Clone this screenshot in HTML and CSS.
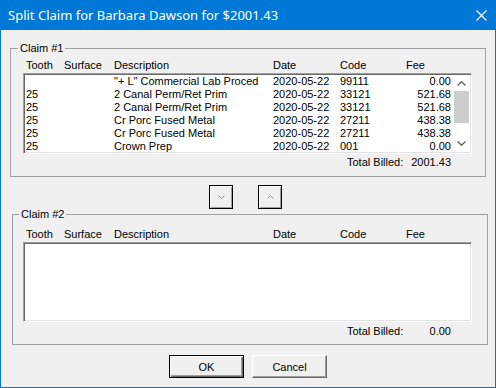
FILE: index.html
```html
<!DOCTYPE html>
<html lang="en">
<head>
    <meta charset="UTF-8">
    <title>Split Claim</title>
    <link rel="stylesheet" href="styles.css">
</head>
<body>
    <div class="window">
        <div class="titlebar">
            <span class="title">Split Claim for Barbara Dawson for $2001.43</span>
            <svg class="close" width="11" height="11" viewBox="0 0 11 11">
                <path d="M0.5 0.5 L10.5 10.5 M10.5 0.5 L0.5 10.5" stroke="#fff" stroke-width="1.1" fill="none"/>
            </svg>
        </div>

        <div class="client">
            <fieldset class="group group-one">
                <legend>Claim #1</legend>
                <div class="cols head">
                    <span>Tooth</span><span>Surface</span><span>Description</span>
                    <span>Date</span><span>Code</span><span>Fee</span>
                </div>
                <div class="list">
                    <div class="rows">
                        <div class="cols row">
                            <span></span><span></span><span>"+ L" Commercial Lab Proced</span>
                            <span>2020-05-22</span><span>99111</span><span class="fee">0.00</span>
                        </div>
                        <div class="cols row">
                            <span>25</span><span></span><span>2 Canal Perm/Ret Prim</span>
                            <span>2020-05-22</span><span>33121</span><span class="fee">521.68</span>
                        </div>
                        <div class="cols row">
                            <span>25</span><span></span><span>2 Canal Perm/Ret Prim</span>
                            <span>2020-05-22</span><span>33121</span><span class="fee">521.68</span>
                        </div>
                        <div class="cols row">
                            <span>25</span><span></span><span>Cr Porc Fused Metal</span>
                            <span>2020-05-22</span><span>27211</span><span class="fee">438.38</span>
                        </div>
                        <div class="cols row">
                            <span>25</span><span></span><span>Cr Porc Fused Metal</span>
                            <span>2020-05-22</span><span>27211</span><span class="fee">438.38</span>
                        </div>
                        <div class="cols row">
                            <span>25</span><span></span><span>Crown Prep</span>
                            <span>2020-05-22</span><span>001</span><span class="fee">0.00</span>
                        </div>
                    </div>
                    <div class="scrollbar">
                        <div class="arrow">
                            <svg width="9" height="5" viewBox="0 0 9 5"><path d="M0.5 4.5 L4.5 0.8 L8.5 4.5" stroke="#606060" stroke-width="1.4" fill="none"/></svg>
                        </div>
                        <div class="thumb"></div>
                        <div class="track"></div>
                        <div class="arrow">
                            <svg width="9" height="5" viewBox="0 0 9 5"><path d="M0.5 0.5 L4.5 4.2 L8.5 0.5" stroke="#606060" stroke-width="1.4" fill="none"/></svg>
                        </div>
                    </div>
                </div>
                <div class="total">
                    <span>Total Billed:</span>
                    <span class="amount">2001.43</span>
                </div>
            </fieldset>

            <div class="movers">
                <button class="mover">
                    <svg width="7" height="4" viewBox="0 0 7 4"><path d="M0.5 0.5 L3.5 3.5 L6.5 0.5" stroke="#8c8c8c" stroke-width="1" fill="none"/></svg>
                </button>
                <button class="mover">
                    <svg width="7" height="4" viewBox="0 0 7 4"><path d="M0.5 3.5 L3.5 0.5 L6.5 3.5" stroke="#8c8c8c" stroke-width="1" fill="none"/></svg>
                </button>
            </div>

            <fieldset class="group group-two">
                <legend>Claim #2</legend>
                <div class="cols head">
                    <span>Tooth</span><span>Surface</span><span>Description</span>
                    <span>Date</span><span>Code</span><span>Fee</span>
                </div>
                <div class="list list-empty"></div>
                <div class="total">
                    <span>Total Billed:</span>
                    <span class="amount">0.00</span>
                </div>
            </fieldset>

            <div class="actions">
                <button class="btn btn-default">OK</button>
                <button class="btn">Cancel</button>
            </div>
        </div>
    </div>
</body>
</html>
```

FILE: styles.css
```css
* {
    box-sizing: border-box;
}

body {
    margin: 0;
    font-family: "Liberation Sans", Arial, sans-serif;
    font-size: 11px;
    color: #000;
    background-color: #f0f0f0;
}

.window {
    width: 496px;
    height: 388px;
    border: 1px solid #0078d7;
    border-top: none;
    display: flex;
    flex-direction: column;
}

.titlebar {
    height: 30px;
    flex-shrink: 0;
    background-color: #0078d7;
    color: #fff;
    display: flex;
    align-items: center;
    justify-content: space-between;
    padding: 0 9px 0 8px;
    margin: 0 -1px;
}

.title {
    font-family: "Noto Sans", "Open Sans", sans-serif;
    font-size: 13px;
}

.close {
    display: block;
}

.client {
    flex: 1;
    background-color: #f0f0f0;
}

/* group boxes */

.group {
    width: 476px;
    margin: 0;
    border: 1px solid #a0a0a0;
    min-width: 0;
}

.group legend {
    line-height: 13px;
    padding: 0 2px;
}

.group-one {
    margin: 12px 0 0 9px;
    padding: 4px 13px 7px 12px;
}

.group-one legend {
    margin-left: -5px;
}

.group-two {
    margin: -1px 0 0 11px;
    padding: 7px 15px 6px 10px;
}

.group-two legend {
    margin-left: -4px;
}

/* columns */

.cols {
    display: grid;
    grid-template-columns: 41px 50px 159px 67px 66px 45px;
    line-height: 13px;
    white-space: nowrap;
}

.cols span {
    overflow: hidden;
}

.cols span:first-child {
    padding-left: 3px;
}

.head {
    margin-bottom: 1px;
}

.list {
    display: flex;
    height: 81px;
    background-color: #fff;
    border-top: 1px solid #a0a0a0;
    border-left: 1px solid #a0a0a0;
    border-right: 1px solid #fff;
    border-bottom: 1px solid #fff;
    box-shadow: inset 1px 1px 0 #696969, inset -1px -1px 0 #e3e3e3;
    padding: 1px;
}

.list-empty {
    height: 80px;
}

.rows {
    flex: 1;
    overflow: hidden;
}

.row {
    grid-template-columns: 39px 50px 159px 67px 66px 45px;
}

.row span:first-child {
    padding-left: 1px;
}

.row .fee {
    text-align: right;
}

.scrollbar {
    width: 17px;
    display: flex;
    flex-direction: column;
    background-color: #fff;
}

.arrow {
    height: 17px;
    display: flex;
    align-items: center;
    justify-content: center;
}

.thumb {
    height: 32px;
    margin: -1px 1px 0 1px;
    background-color: #cdcdcd;
}

.track {
    flex: 1;
}

.total {
    display: flex;
    line-height: 13px;
    margin-top: 2px;
    padding-left: 324px;
    padding-right: 21px;
}

.group-two .total {
    margin-top: 3px;
}

.amount {
    margin-left: auto;
    text-align: right;
}

/* buttons */

button {
    font-family: "Liberation Sans", Arial, sans-serif;
    font-size: 11px;
    color: #000;
    background-color: #f0f0f0;
    padding: 0;
    cursor: pointer;
}

.movers {
    display: flex;
    gap: 25px;
    margin: 8px 0 0 208px;
}

.mover {
    width: 24px;
    height: 24px;
    border: 1px solid #000;
    box-shadow: inset 1px 1px 0 #fff, inset -1px -1px 0 #a0a0a0;
    display: flex;
    align-items: center;
    justify-content: center;
}

.mover svg {
    display: block;
}

.actions {
    display: flex;
    gap: 8px;
    margin: 10px 0 0 168px;
}

.btn {
    width: 75px;
    height: 23px;
    border: 1px solid;
    border-color: #fff #696969 #696969 #fff;
    box-shadow: inset -1px -1px 0 #a0a0a0;
}

.btn-default {
    border-color: #000;
    box-shadow: inset 1px 1px 0 #fff, inset -1px -1px 0 #696969, inset -2px -2px 0 #a0a0a0;
}
```
